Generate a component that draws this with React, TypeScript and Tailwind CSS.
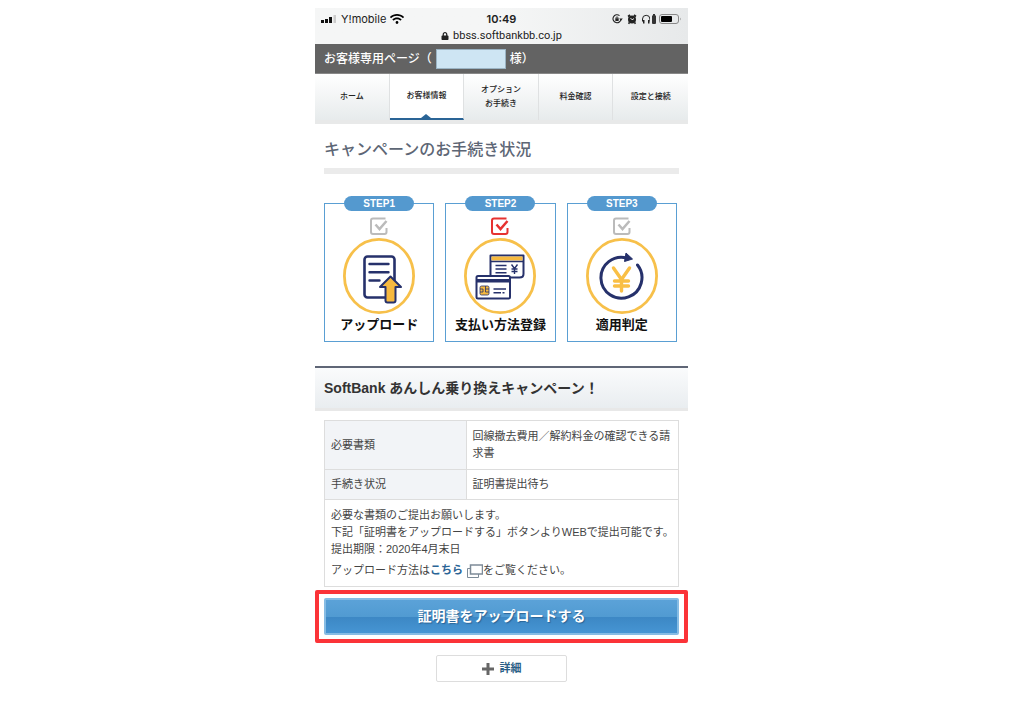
import type { ReactNode } from "react" // Import ReactNode for typing the step icons
import clsx from "clsx" // Import clsx for conditional class merging
import { FaLock, FaWifi } from "react-icons/fa" // Import solid icons for the status bar

// Shape of one tab in the customer page navigation
type NavItem = {
  lines: string[] // Label split into the lines it is drawn on
  active?: boolean // Whether this tab is the current page
}

// Tabs shown under the page header
const navItems: NavItem[] = [
  { lines: ["ホーム"] },
  { lines: ["お客様情報"], active: true },
  { lines: ["オプション", "お手続き"] },
  { lines: ["料金確認"] },
  { lines: ["設定と接続"] },
]

// Document with an upload arrow, for the first step
function UploadIcon() {
  return (
    <>
      <rect x="21.5" y="18.5" width="30" height="41" rx="3" fill="#fff" stroke="#26316b" strokeWidth="2.6" />
      <path d="M26.5 26h19M26.5 34.3h19M26.5 42.5h10" stroke="#26316b" strokeWidth="2.4" strokeLinecap="round" />
      <path d="M47.5 38.5 58 49h-5.5v13.5q0 2-2 2h-6q-2 0-2-2V49H37Z" fill="#f6b93f" stroke="#26316b" strokeWidth="2" strokeLinejoin="round" />
    </>
  )
}

// Payment slip behind a credit card, for the second step
function PaymentIcon() {
  return (
    <>
      <path d="M26.5 17.5h33V36q0 3.5-4 3.5h-29Z" fill="#fff" stroke="#26316b" strokeWidth="2" strokeLinejoin="round" />
      <path d="M27.5 18.5h31v4h-31Z" fill="#f6b93f" />
      <path d="M26.5 23.5h33" stroke="#26316b" strokeWidth="1.5" />
      <path d="M31.5 27.5h11M31.5 31h11M31.5 34.7h11" stroke="#26316b" strokeWidth="1.5" />
      <path d="m47.5 26.5 3 4 3-4M50.5 30.5V36M47.5 31h6M47.5 33.5h6" fill="none" stroke="#26316b" strokeWidth="1.4" />
      <rect x="12.5" y="38" width="33.5" height="22.5" rx="1.5" fill="#fff" stroke="#26316b" strokeWidth="2" />
      <path d="M12.5 41h33.5v3.5H12.5Z" fill="#26316b" />
      <rect x="16" y="48" width="9" height="9" rx="1.5" fill="#f6b93f" stroke="#26316b" strokeWidth=".8" />
      <path d="M16 51h3v3h-3M25 51h-3.5v3H25M21.5 48v3" fill="none" stroke="#26316b" strokeWidth=".8" />
      <path d="M29.5 51H42M29.5 54.7h7.5M38.5 54.7h2" stroke="#26316b" strokeWidth="1.5" />
    </>
  )
}

// Yen mark inside a turning arrow, for the third step
function JudgeIcon() {
  return (
    <>
      <path d="M41 20A20.5 20.5 0 1 0 51.5 27" fill="none" stroke="#26316b" strokeWidth="3" strokeLinecap="round" />
      <path d="m40 15 6.500 6-8 2.500Z" fill="#26316b" stroke="#26316b" strokeLinejoin="round" />
      <path d="m27.5 30 8 11.5 8-11.5M35.5 41.5V53M28.5 43h14M28.5 48h14" fill="none" stroke="#f9bf45" strokeWidth="3.4" strokeLinecap="round" />
    </>
  )
}

// Shape of one card in the progress row
type Step = {
  title: string // Text in the blue pill
  label: string // Name of the step
  done?: boolean // Whether the check mark is lit
  icon: ReactNode // Drawing inside the yellow ring
}

// Campaign steps in order
const steps: Step[] = [
  { title: "STEP1", label: "アップロード", icon: <UploadIcon /> },
  { title: "STEP2", label: "支払い方法登録", done: true, icon: <PaymentIcon /> },
  { title: "STEP3", label: "適用判定", icon: <JudgeIcon /> },
]

// Phone status bar with the signal, clock, indicators and address
function StatusBar() {
  return (
    <div className="h-9 bg-linear-to-r from-[#f5f6f6] via-[#f5f6f6] to-[#e7e9ea] px-1.5 pt-1 font-[Inter,sans-serif] text-[11px] leading-3 text-[#222]">
      <div className="grid grid-cols-[1fr_auto_1fr] items-center">
        {/* Left: carrier */}
        <div className="flex items-center gap-1">
          <svg className="h-2 w-4" viewBox="0 0 16 8" aria-hidden="true">
            <path d="M0 5h3v3H0ZM4 4h3v4H4ZM8 2h3v6H8Z" fill="#111" />
            <path d="M12.5 0H15v8h-2.500Z" fill="#ccc" />
          </svg>
          <span>Y!mobile</span>
          <FaWifi className="size-3.5 text-black" />
        </div>
        <span className="font-semibold">10:49</span>
        {/* Right: rotation lock, alarm, headphones and battery */}
        <div className="flex items-center justify-end text-[#222]">
          <svg className="h-3 w-[38px]" viewBox="0 0 38 12" fill="none" stroke="currentColor" aria-hidden="true">
            <path d="M7.500 2.600A4 4 0 1 0 9 6" strokeWidth="1.100" />
            <path d="m7.200 5.500 3.600 0-1.800 2.300Z" fill="currentColor" stroke="none" />
            <rect x="3.300" y="5.300" width="3.400" height="2.700" rx=".4" fill="currentColor" stroke="none" />
            <path d="M4 5.500V5q0-1.200 1-1.200T6 5v.5" strokeWidth=".8" />
            <circle cx="20" cy="6.500" r="4" fill="currentColor" stroke="none" />
            <path d="M16 3.500 18 2M24 3.500 22 2M17.500 9.500l-1 1.200M22.500 9.500l1 1.200" strokeWidth="1.600" />
            <path d="M18.500 5 20 6.800 22 5.600" stroke="#eee" strokeWidth=".9" />
            <path d="M30.500 8.500V6a3.700 3.700 0 0 1 7.400 0v2.500" strokeWidth="1" />
            <path d="M31 7v3.500h1.500V7ZM36 7v3.500h1.500V7Z" fill="currentColor" stroke="none" />
          </svg>
          <svg className="ml-0.5 h-2.5 w-1" viewBox="0 0 4 10" aria-hidden="true">
            <path d="M1 0h2v1.500h1V9q0 1-1 1H1Q0 10 0 9V1.500h1Z" fill="#333" />
          </svg>
          <svg className="ml-0.5 h-2.5 w-6" viewBox="0 0 24 10" aria-hidden="true">
            <rect x="1.5" y=".5" width="19" height="9" rx="2.5" fill="none" stroke="#888" />
            <rect x="3" y="2" width="11" height="6" rx="1" fill="#000" />
            <path d="M22 3.500q1.500 1.500 0 3Z" fill="#888" />
          </svg>
        </div>
      </div>
      <div className="mt-1 flex items-center justify-center gap-1">
        <FaLock className="size-2" />
        <span className="font-[Roboto,sans-serif]">bbss.softbankbb.co.jp</span>
      </div>
    </div>
  )
}

// Row of tabs below the dark header
function MainNav() {
  return (
    <nav className="grid h-[50px] grid-cols-5 border-b-4 border-[#e8e9e9] bg-linear-to-b from-white to-[#e7ebec]">
      {navItems.map((item) => (
        <a
          key={item.lines[0]}
          href="#"
          className={clsx(
            "relative flex flex-col items-center justify-center border-r border-[#dfe1e2] text-[8px] leading-[14px] font-medium text-[#222] last:border-r-0",
            item.active && "border-b-2 border-b-[#2a6496] bg-white",
          )}
        >
          {item.lines.map((line) => (
            <span key={line}>{line}</span>
          ))}
          {/* Pointer rising from the bar of the current tab */}
          {item.active && (
            <svg className="absolute bottom-0 h-1 w-2.5" viewBox="0 0 10 4" aria-hidden="true">
              <path d="M5 0 10 4H0Z" fill="#2a6496" />
            </svg>
          )}
        </a>
      ))}
    </nav>
  )
}

// One card of the progress row
function StepCard({ title, label, done, icon }: Step) {
  return (
    <li className="flex flex-col items-center">
      <span className="z-10 -mb-2 h-[15px] w-[70px] rounded-full bg-[#5499cf] text-center text-[10px] leading-4 font-bold text-white">{title}</span>
      <div className="flex w-full flex-col items-center border border-[#5a9fd3] pt-3 pb-[7px]">
        <svg className={clsx("size-5", done ? "text-[#e63230]" : "text-[#bbb]")} viewBox="0 0 20 20" fill="none" stroke="currentColor" aria-hidden="true">
          <path d="M16.5 2.500H4Q2 2.500 2 4.500V16q0 2 2 2h11.500q2 0 2-2v-4" strokeWidth="2" />
          <path d="m6.500 8.500 4 4.500 7-8" strokeWidth="2.5" />
        </svg>
        <svg className="mt-0.5 h-[76px] w-[72px]" viewBox="0 0 72 76" aria-hidden="true">
          <ellipse cx="36" cy="38" rx="34.6" ry="36.6" fill="#fff" stroke="#f7c04a" strokeWidth="2.8" />
          {icon}
        </svg>
        <span className="mt-0.5 text-[13px] leading-[18px] font-bold text-[#111]">{label}</span>
      </div>
    </li>
  )
}

export default function App() {
  return (
    <div className="min-h-screen bg-white pt-2 pr-[21px] pb-10 font-['Liberation_Sans','Noto_Sans_CJK_JP',sans-serif] text-[#444]">
      <div className="mx-auto max-w-[373px]">
        <StatusBar />

        {/* Dark bar with the customer name masked out */}
        <header className="flex h-[30px] items-center border-b border-[#888] bg-[#636363] pl-[9px] text-[12px] font-medium text-white">
          <span>お客様専用ページ（</span>
          <span className="mx-1 h-5 w-[70px] border border-[#9bb4c4] bg-[#cee5f3]" />
          <span>様）</span>
        </header>

        <MainNav />

        <main>
          <h1 className="mx-[9px] mt-3.5 border-b-6 border-[#ebebeb] pb-1.5 text-[16px] leading-6 font-medium text-[#5d6675]">キャンペーンのお手続き状況</h1>

          <ol className="mt-[22px] grid grid-cols-3 gap-[11px] pr-[11px] pl-[9px]">
            {steps.map((step) => (
              <StepCard key={step.title} {...step} />
            ))}
          </ol>

          <h2 className="mt-6 border-t-2 border-b-3 border-t-[#5f6676] border-b-[#e8e8e8] bg-linear-to-b from-[#fafbfc] to-[#e9edf0] px-[9px] py-2.5 text-[14px] leading-5 font-bold text-[#333]">
            SoftBank あんしん乗り換えキャンペーン！
          </h2>

          {/* Required documents and current state */}
          <div className="mt-[9px] px-[9px]">
            <table className="w-full border-collapse text-left text-[11px] leading-[17px] [&_td]:border [&_td]:border-[#ddd] [&_th]:border [&_th]:border-[#ddd]">
              <tbody>
                <tr>
                  <th scope="row" className="w-2/5 bg-[#f2f4f7] p-1.5 font-normal">必要書類</th>
                  <td className="px-1.5 py-[7px]">回線撤去費用／解約料金の確認できる請求書</td>
                </tr>
                <tr>
                  <th scope="row" className="bg-[#f2f4f7] px-1.5 py-1.5 font-normal">手続き状況</th>
                  <td className="px-1.5 py-1.5">証明書提出待ち</td>
                </tr>
                <tr>
                  <td colSpan={2} className="py-[7px] pl-1.5">
                    <p>必要な書類のご提出お願いします。</p>
                    <p>下記「証明書をアップロードする」ボタンよりWEBで提出可能です。</p>
                    <p>提出期限：2020年4月末日</p>
                    <p className="mt-1 flex items-center">
                      アップロード方法は
                      <a href="#" className="font-bold text-[#2a6496]">こちら</a>
                      <svg className="ml-1 h-3.5 w-4" viewBox="0 0 16 14" fill="#fff" stroke="#7d8b98" aria-hidden="true">
                        <path d="M.5 4.500h11v9H.5Z" />
                        <path d="M3.500 1h12v9h-12Z" strokeWidth="1.500" />
                      </svg>
                      をご覧ください。
                    </p>
                  </td>
                </tr>
              </tbody>
            </table>
          </div>

          {/* Upload button inside its red frame */}
          <div className="mt-[3px] rounded-xs border-4 border-[#fb3338] px-[5px] py-1">
            <button
              type="button"
              className="h-[37px] w-full rounded-xs border-2 border-[#86bce4] bg-[linear-gradient(#5ba2d8,#519bd2_50%,#3c87c4_50%,#4695d3)] text-[14px] font-bold text-white text-shadow-[1px_1px_1px_#2a6496]"
            >
              証明書をアップロードする
            </button>
          </div>

          <button
            type="button"
            className="mx-auto mt-3 flex h-[27px] w-[131px] items-center justify-center gap-1.5 rounded-xs border border-[#ddd] bg-white text-[11px] font-bold text-[#2a5f86]"
          >
            <svg className="size-3" viewBox="0 0 12 12" aria-hidden="true">
              <path d="M6 0v12M0 6h12" stroke="#666" strokeWidth="3" />
            </svg>
            詳細
          </button>
        </main>
      </div>
    </div>
  )
}
